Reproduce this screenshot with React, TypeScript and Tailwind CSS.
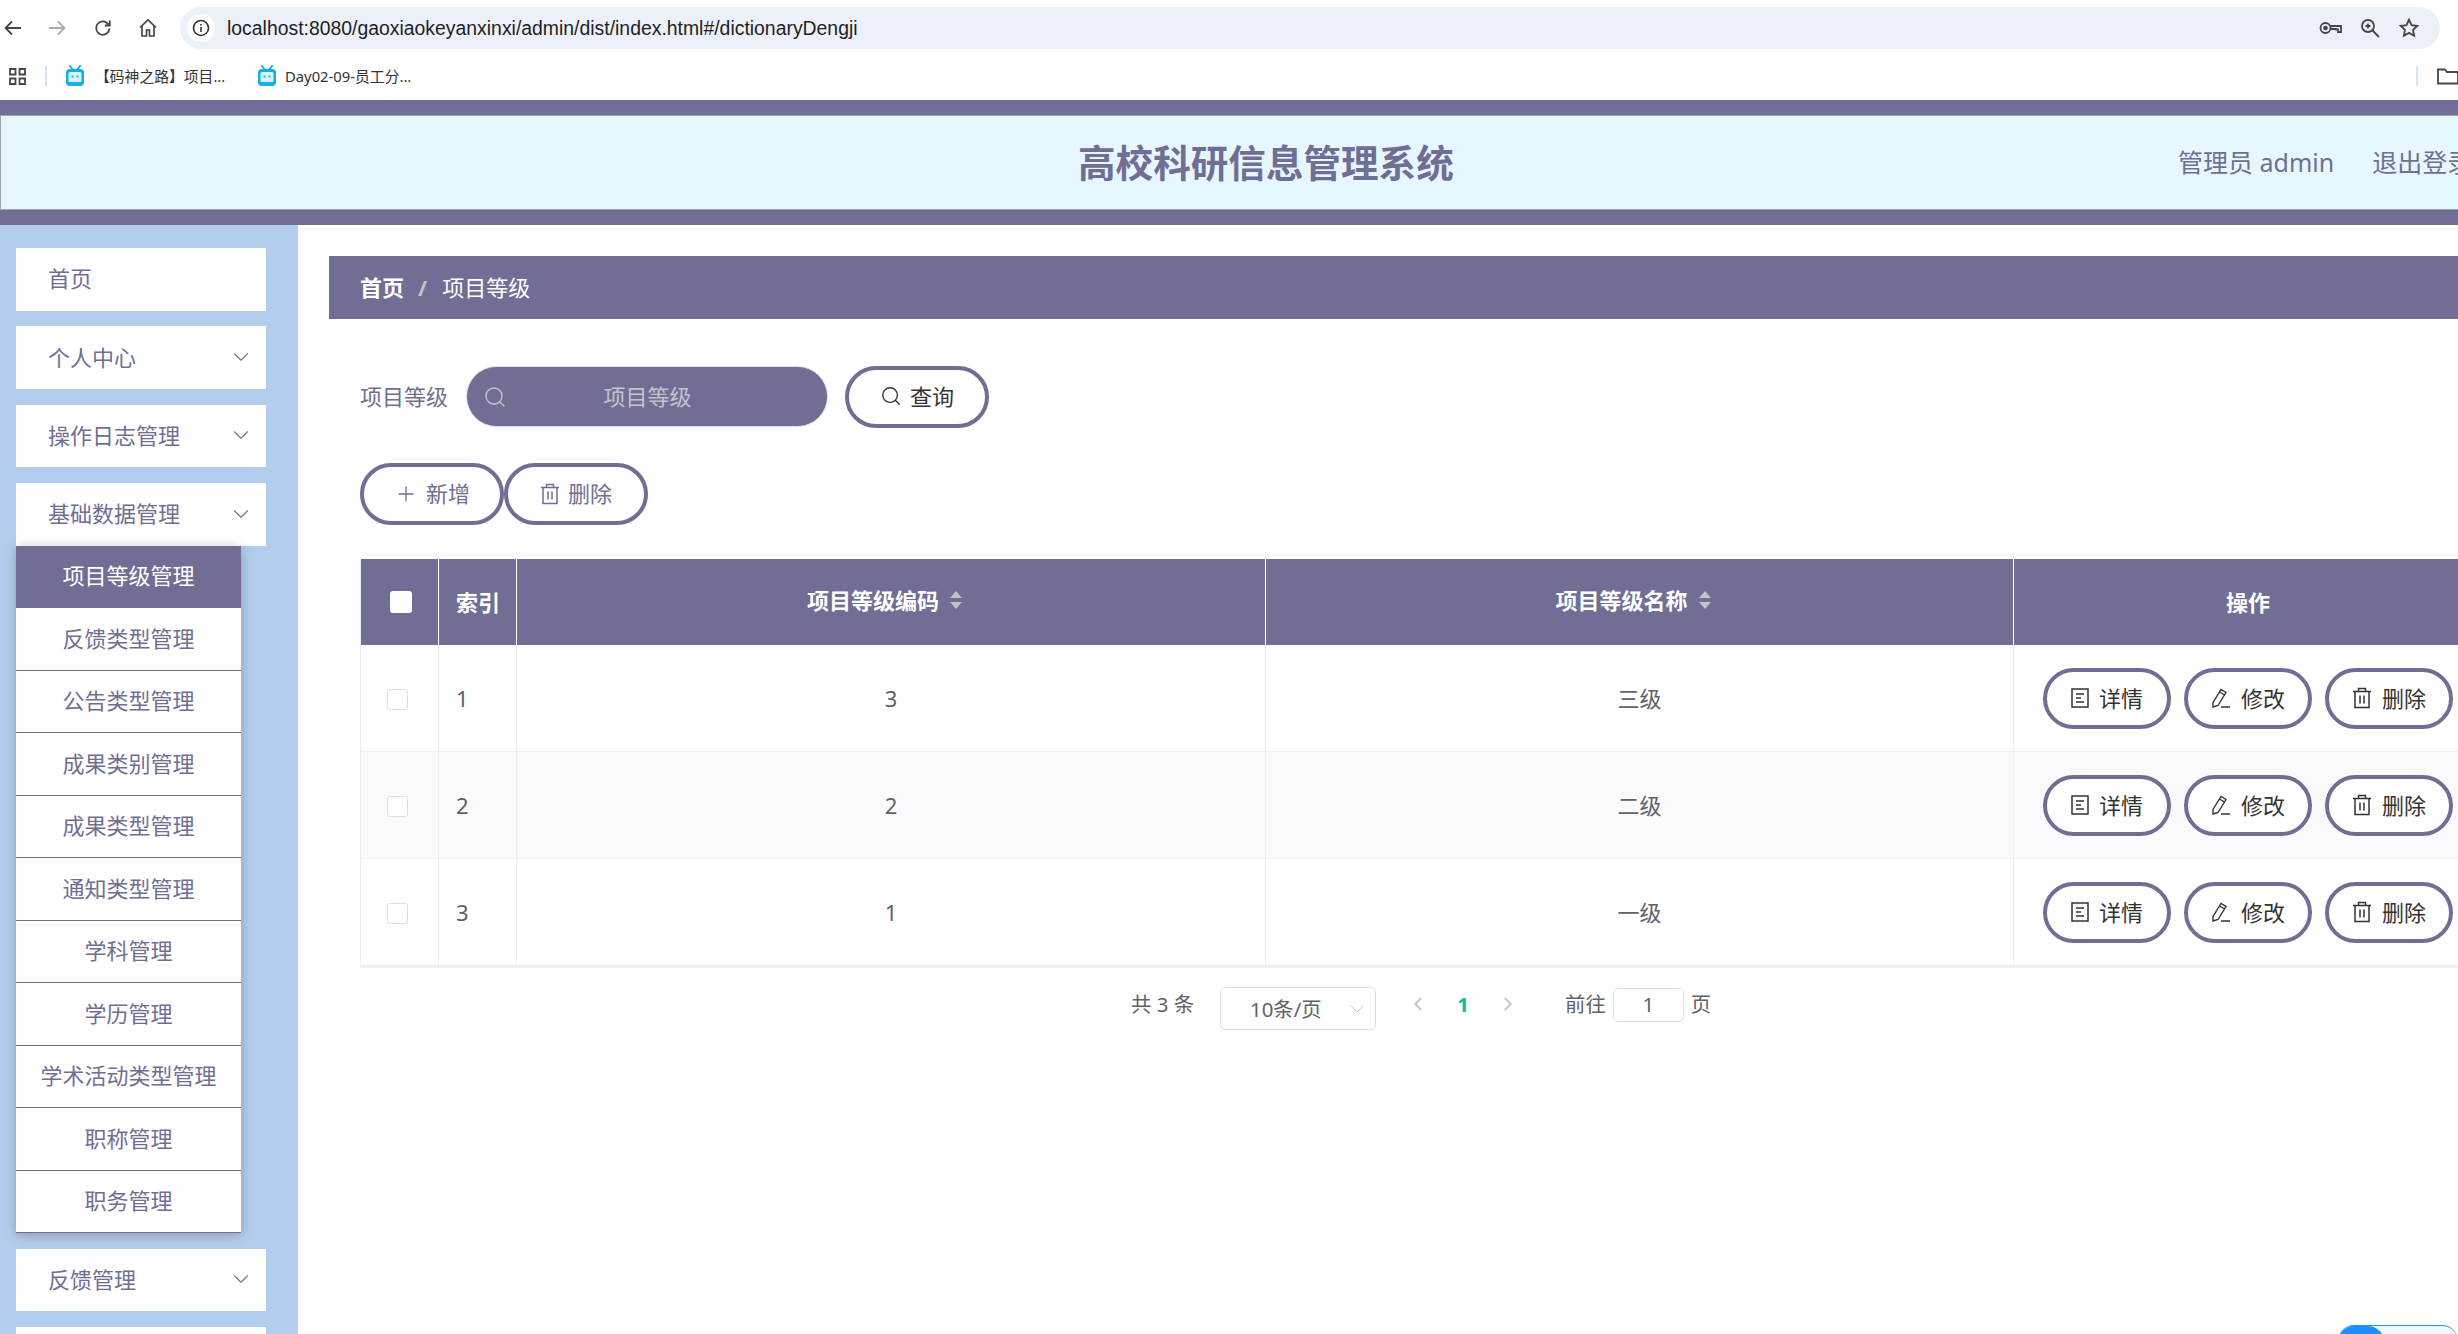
import React from "react";
import { ChevronDown, ChevronLeft, ChevronRight, Plus, Search } from "lucide-react";

const FONT = "font-['Noto_Sans','Noto_Sans_CJK_SC',sans-serif]";

const subMenus = [
  "项目等级管理",
  "反馈类型管理",
  "公告类型管理",
  "成果类别管理",
  "成果类型管理",
  "通知类型管理",
  "学科管理",
  "学历管理",
  "学术活动类型管理",
  "职称管理",
  "职务管理",
];

const rows = [
  { index: 1, code: "3", name: "三级" },
  { index: 2, code: "2", name: "二级" },
  { index: 3, code: "1", name: "一级" },
];

// icons
const TrashIcon = () => (
  <svg width="20" height="22" viewBox="0 0 20 22" fill="none" stroke="currentColor" strokeWidth="1.5">
    <path d="M1 4.5h18M6.5 4.5V1.5h7v3M3 4.5v16h14v-16M8 8.5v8M12 8.5v8" />
  </svg>
);

const TicketIcon = () => (
  <svg width="18" height="20" viewBox="0 0 18 20" fill="none" stroke="currentColor" strokeWidth="1.5">
    <path d="M1 1h16v18H1zM5 6h8M5 10h5M5 14h8" />
  </svg>
);

const EditIcon = () => (
  <svg width="20" height="20" viewBox="0 0 20 20" fill="none" stroke="currentColor" strokeWidth="1.4">
    <path d="M2 14.5 10 1.5l5 3-8 13-5 1.5zM8.5 4l5 3M10 19h9" />
  </svg>
);

const BiliIcon = () => (
  <svg width="20" height="22" viewBox="0 0 20 22">
    <path d="M5 1l3 4M15 1l-3 4" stroke="#12b0e6" strokeWidth="2" strokeLinecap="round" />
    <rect x="1" y="4" width="18" height="17" rx="4" fill="#12b0e6" />
    <rect x="3.5" y="7" width="13" height="10" rx="1.5" fill="#d8f3fc" />
    <path d="M7.5 10.5v2M12.5 10.5v2" stroke="#12b0e6" strokeWidth="1.8" />
  </svg>
);

const SortCaret = () => (
  <svg width="14" height="20" viewBox="0 0 14 20" fill="#c0c4cc">
    <path d="M7 1l6 7H1zM7 19l-6-7h12z" />
  </svg>
);

const PillButton = ({ children, dark }: { children: React.ReactNode; dark?: boolean }) => (
  <button
    className={`flex items-center justify-center gap-[8px] h-[62px] w-[144px] pb-px shrink-0 rounded-full border-[4px] border-[#706e95] bg-white text-[22px] ${
      dark ? "text-[#333333]" : "text-[#706e95]"
    }`}
  >
    {children}
  </button>
);

const ActionButton = ({ icon, label }: { icon: React.ReactNode; label: string }) => (
  <button className="flex items-center justify-center gap-[10px] h-[61px] w-[128px] shrink-0 rounded-full border-[4px] border-[#706e95] bg-white text-[22px] text-[#333333]">
    {icon}
    {label}
  </button>
);

const MenuItem = ({ label, arrow = true }: { label: string; arrow?: boolean }) => (
  <div className="flex items-center justify-between h-[62.7px] w-[250px] pl-[32px] pr-[12px] pb-px bg-white text-[22px] text-[#706e95]">
    <span>{label}</span>
    {arrow && <ChevronDown size={26} strokeWidth={1} />}
  </div>
);

const App = () => {
  return (
    <div className={`w-[2458px] h-[1334px] overflow-hidden bg-white ${FONT}`}>
      {/* browser bar */}
      <div className="flex items-center h-[56px]">
        <div className="flex items-center w-[180px] pl-[3px] text-[#444746]">
          <svg width="20" height="20" viewBox="0 0 20 20" fill="none" stroke="currentColor" strokeWidth="1.8">
            <path d="M18 10H3M9 3.5 2.5 10 9 16.5" />
          </svg>
          <svg className="ml-[24px] text-[#a9abae]" width="20" height="20" viewBox="0 0 20 20" fill="none" stroke="currentColor" strokeWidth="1.8">
            <path d="M2 10h15M11 3.5l6.5 6.5-6.500 6.500" />
          </svg>
          <svg className="ml-[26px]" width="20" height="20" viewBox="0 0 20 20" fill="none" stroke="currentColor" strokeWidth="1.8">
            <path d="M16.5 10.5a6.7 6.7 0 1 1-2-5.2l2.2 2.2M16.8 2.5v5h-5" />
          </svg>
          <svg className="ml-[25px]" width="20" height="20" viewBox="0 0 20 20" fill="none" stroke="currentColor" strokeWidth="1.7">
            <path d="M2 9.5 10 2l8 7.5M4 8v10h4.5v-6h3v6H16V8" />
          </svg>
        </div>
        <div className="flex items-center w-[2260px] h-[42px] rounded-full bg-[#ecf1f9] pl-[7px] pr-[20px]">
          <div className="flex items-center justify-center w-[28px] h-[28px] rounded-full bg-white text-[#333]">
            <svg width="18" height="18" viewBox="0 0 18 18" fill="none" stroke="currentColor" strokeWidth="1.6">
              <circle cx="9" cy="9" r="7.5" />
              <path d="M9 8v5M9 5v1.6" />
            </svg>
          </div>
          <div className="ml-[12px] pt-px font-['Liberation_Sans',sans-serif] text-[19.4px] text-[#1f1f1f] whitespace-nowrap">
            localhost:8080/gaoxiaokeyanxinxi/admin/dist/index.html#/dictionaryDengji
          </div>
          <div className="ml-auto flex items-center gap-[18px] text-[#444746]">
            <svg width="23" height="14" viewBox="0 0 23 14" fill="none" stroke="currentColor" strokeWidth="1.8">
              <circle cx="6.5" cy="7" r="5" />
              <circle cx="6.5" cy="7" r="1.4" fill="currentColor" />
              <path d="M11.5 5H22v6h-3V8.5h-2V8h-5.500" />
            </svg>
            <svg width="20" height="20" viewBox="0 0 20 20" fill="none" stroke="currentColor" strokeWidth="1.8">
              <circle cx="8" cy="8" r="6" />
              <path d="M12.500 12.500 19 19M5.500 8h5M8 5.500v5" />
            </svg>
            <svg width="22" height="22" viewBox="0 0 24 24" fill="none" stroke="currentColor" strokeWidth="2">
              <path d="m12 3 2.800 6 6.200.8-4.600 4.300 1.200 6.400L12 17.300l-5.600 3.200 1.200-6.400L3 9.800 9.200 9z" />
            </svg>
          </div>
        </div>
      </div>
      {/* bookmarks */}
      <div className="flex items-center h-[44px] pb-[4px] text-[14.8px] text-[#333]">
        <svg className="ml-[9px] shrink-0" width="17" height="17" viewBox="0 0 17 17" fill="none" stroke="#444746" strokeWidth="1.8">
          <path d="M1 1h5.500v5.500H1zM10.500 1H16v5.500h-5.500zM1 10.500h5.500V16H1zM10.500 10.500H16V16h-5.500z" />
        </svg>
        <div className="ml-[19px] w-[2px] h-[20px] bg-[#d3e3fd]" />
        <div className="ml-[18px]">
          <BiliIcon />
        </div>
        <span className="ml-[10px] w-[162px] whitespace-nowrap">【码神之路】项目...</span>
        <BiliIcon />
        <span className="ml-[8px] whitespace-nowrap">Day02-09-员工分...</span>
        <div className="ml-auto w-[2px] h-[20px] bg-[#d3e3fd]" />
        <svg className="ml-[19px] -mr-px shrink-0" width="22" height="17" viewBox="0 0 22 17" fill="none" stroke="#444746" strokeWidth="1.8">
          <path d="M1 15.500V1.500h7l2 2.500h11v11.500z" />
        </svg>
      </div>
      {/* header */}
      <div className="h-[125px] bg-[#706e95] pt-[15px]">
        <div className="flex items-center h-[95px] pl-[1077px] bg-[#e7f7ff] border-y border-l border-[#9aa5bc] whitespace-nowrap">
          <div className="w-[375px] shrink-0 text-[37.6px] leading-none font-bold text-[#706e95]">高校科研信息管理系统</div>
          <div className="flex shrink-0 gap-[38px] ml-[725px] text-[25px] text-[#706e95]">
            <span>管理员 admin</span>
            <span>退出登录</span>
          </div>
        </div>
      </div>
      <div className="flex h-[1109px]">
        {/* sidebar */}
        <div className="w-[298px] shrink-0 overflow-hidden bg-[#b3ceec] pl-[16px] pt-[23px]">
          <div className="flex flex-col gap-[15.6px]">
            <MenuItem label="首页" arrow={false} />
            <MenuItem label="个人中心" />
            <MenuItem label="操作日志管理" />
            <div>
              <MenuItem label="基础数据管理" />
              <div className="w-[225px] shadow-[0_2px_12px_rgba(0,0,0,0.25)] relative">
                {subMenus.map((item, i) => (
                  <div
                    key={item}
                    className={`flex items-center justify-center h-[62.5px] pb-px border-b border-[#706e95] text-[22px] ${
                      i === 0 ? "bg-[#706e95] text-white" : "bg-white text-[#706e95]"
                    }`}
                  >
                    {item}
                  </div>
                ))}
              </div>
            </div>
            <MenuItem label="反馈管理" />
            <MenuItem label="公告管理" />
          </div>
        </div>
        {/* content */}
        <div className="relative flex-1 min-w-0 pl-[31px] pt-[31px]">
          <div className="flex items-center h-[63px] pl-[31px] bg-[#706e95] text-[22px] text-white">
            <span className="font-bold">首页</span>
            <span className="ml-[14px] mr-[15px] font-bold text-[#c0c4cc]">/</span>
            <span>项目等级</span>
          </div>
          <div className="pl-[31px]">
            <div className="flex items-center mt-[47px] h-[61px]">
              <span className="w-[106px] text-[22px] text-[#706e95]">项目等级</span>
              <div className="flex items-center w-[362px] h-[61px] pl-[16px] pr-[39px] rounded-full border border-[#dcdfe6] bg-[#706e95] text-[#c0c4cc]">
                <Search size={24} strokeWidth={1.4} className="shrink-0" />
                <input
                  readOnly
                  placeholder="项目等级"
                  className="w-full min-w-0 bg-transparent text-center text-[22px] outline-none placeholder:text-[#c0c4cc]"
                />
              </div>
              <div className="ml-[17px]">
                <PillButton dark>
                  <Search size={22} strokeWidth={1.5} />
                  查询
                </PillButton>
              </div>
            </div>
            <div className="flex mt-[36px]">
              <PillButton>
                <Plus size={24} strokeWidth={1.3} />
                新增
              </PillButton>
              <PillButton>
                <TrashIcon />
                删除
              </PillButton>
            </div>
            {/* table */}
            <div className="mt-[34px] w-[2123px] text-[22px] text-[#606266] border-l border-b-2 border-[#ebeef5]">
              <div className="grid grid-cols-[78px_78px_749px_748px_470px] h-[86px] bg-[#706e95] font-bold text-white">
                <div className="flex items-center justify-center pl-[2px] border-r border-white">
                  <span className="w-[22px] h-[22px] rounded-[3px] bg-white" />
                </div>
                <div className="flex items-center pl-[17px] border-r border-white">索引</div>
                <div className="flex items-center justify-center gap-[10px] pb-[4px] pr-[12px] border-r border-white">
                  项目等级编码
                  <SortCaret />
                </div>
                <div className="flex items-center justify-center gap-[10px] pb-[4px] pr-[12px] border-r border-white">
                  项目等级名称
                  <SortCaret />
                </div>
                <div className="flex items-center justify-center pr-[2px]">操作</div>
              </div>
              {rows.map((row, i) => (
                <div
                  key={row.index}
                  className={`grid grid-cols-[78px_78px_749px_748px_470px] h-[107px] border-b border-[#ebeef5] ${
                    i === 1 ? "bg-[#fafafd]" : "bg-white"
                  }`}
                >
                  <div className="flex items-center justify-center pr-[5px] pt-[2px] border-r border-[#ebeef5]">
                    <span className="w-[21px] h-[21px] rounded-[3px] border border-[#dcdfe6] bg-white" />
                  </div>
                  <div className="flex items-center pl-[17px] border-r border-[#ebeef5]">{row.index}</div>
                  <div className="flex items-center justify-center border-r border-[#ebeef5]">{row.code}</div>
                  <div className="flex items-center justify-center border-r border-[#ebeef5]">{row.name}</div>
                  <div className="flex items-center justify-center gap-[13px] pr-[2px]">
                    <ActionButton icon={<TicketIcon />} label="详情" />
                    <ActionButton icon={<EditIcon />} label="修改" />
                    <ActionButton icon={<TrashIcon />} label="删除" />
                  </div>
                </div>
              ))}
            </div>
            {/* pagination */}
            <div className="flex items-start mt-[19px] pl-[771px] text-[20.400px] leading-[34px] text-[#606266] whitespace-nowrap">
              <span className="w-[89px]">共 3 条</span>
              <div className="flex items-center justify-between w-[156px] h-[43px] pl-[29px] pr-[6px] rounded-[5px] border border-[#dcdfe6]">
                <span>10条/页</span>
                <ChevronDown size={24} strokeWidth={1} className="text-[#c0c4cc]" />
              </div>
              <div className="flex items-center h-[34px] ml-[31px] w-[120px] text-[#c0c4cc]">
                <ChevronLeft size={22} strokeWidth={2} />
                <span className="w-[46px] mx-[11px] text-center font-bold text-[#00c292]">1</span>
                <ChevronRight size={22} strokeWidth={2} />
              </div>
              <span className="ml-[38px]">前往</span>
              <div className="ml-[7px] mt-px w-[71px] h-[34px] rounded-[5px] border border-[#dcdfe6] text-center leading-[30px]">1</div>
              <span className="ml-[7px]">页</span>
            </div>
          </div>
          {/* floating widget, cut off by the window */}
          <div className="absolute left-[2040px] top-[1100px] w-[120px] h-[30px] rounded-t-[16px] bg-[#eef6fe] border-t border-[#1890ff]">
            <div className="w-[46px] h-full rounded-t-[16px] bg-[#1890ff]" />
          </div>
        </div>
      </div>
    </div>
  );
};

export default App;
